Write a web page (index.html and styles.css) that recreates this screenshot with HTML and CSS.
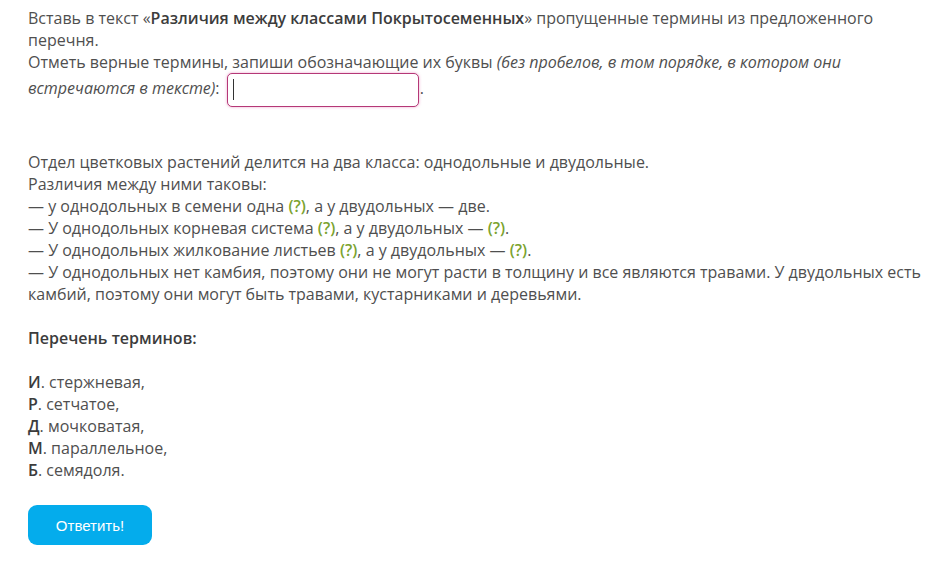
FILE: index.html
```html
<!DOCTYPE html>
<html lang="ru">
<head>
<meta charset="utf-8">
<link rel="stylesheet" href="styles.css">
</head>
<body>
<div class="task">
  <p class="intro">Вставь в текст «<b>Различия между классами Покрытосеменных</b>» пропущенные термины из предложенного перечня.<br>Отметь верные термины, запиши обозначающие их буквы <i>(без пробелов, в том порядке, в котором они встречаются в тексте)</i>: <span class="answer"><span class="caret"></span></span>.</p>
  <p class="text">Отдел цветковых растений делится на два класса: однодольные и двудольные.<br>Различия между ними таковы:<br>— у однодольных в семени одна <span class="q">(?)</span>, а у двудольных — две.<br>— У однодольных корневая система <span class="q">(?)</span>, а у двудольных — <span class="q">(?)</span>.<br>— У однодольных жилкование листьев <span class="q">(?)</span>, а у двудольных — <span class="q">(?)</span>.<br>— У однодольных нет камбия, поэтому они не могут расти в толщину и все являются травами. У двудольных есть камбий, поэтому они могут быть травами, кустарниками и деревьями.</p>
  <p class="title"><b>Перечень терминов:</b></p>
  <p class="terms"><b>И</b>. стержневая,<br><b>Р</b>. сетчатое,<br><b>Д</b>. мочковатая,<br><b>М</b>. параллельное,<br><b>Б</b>. семядоля.</p>
  <button class="submit" type="button">Ответить!</button>
</div>
</body>
</html>
```
FILE: styles.css
```css
html, body {
  margin: 0;
  background: #ffffff;
}
.task {
  padding: 7px 0 0 28px;
  font-family: "Open Sans", "DejaVu Sans", sans-serif;
  font-size: 16px;
  line-height: 22px;
  color: #4f4f4f;
}
.task p {
  margin: 0;
}
.task b {
  font-weight: 600;
  color: #3c3c3c;
}
.intro i {
  font-style: italic;
}
.answer {
  display: inline-block;
  box-sizing: border-box;
  width: 192px;
  height: 34px;
  margin: 0 1px 0 3px;
  vertical-align: middle;
  border: 1px solid #b53877;
  border-radius: 5px;
  box-shadow: 0 0 3px rgba(220, 90, 160, 0.55);
  background: #fff;
  position: relative;
}
.caret {
  position: absolute;
  left: 5px;
  top: 5px;
  width: 1px;
  height: 21px;
  background: #333;
}
.text {
  margin-top: 44px !important;
}
.q {
  color: #7ba32f;
  font-weight: 600;
}
.title {
  margin-top: 22px !important;
}
.terms {
  margin-top: 22px !important;
}
.submit {
  display: block;
  margin-top: 24px;
  width: 124px;
  height: 40px;
  border: none;
  border-radius: 9px;
  background: #04acec;
  color: #ffffff;
  font-family: "Liberation Sans", Arial, sans-serif;
  font-size: 15px;
  padding: 0;
  cursor: pointer;
}
```
